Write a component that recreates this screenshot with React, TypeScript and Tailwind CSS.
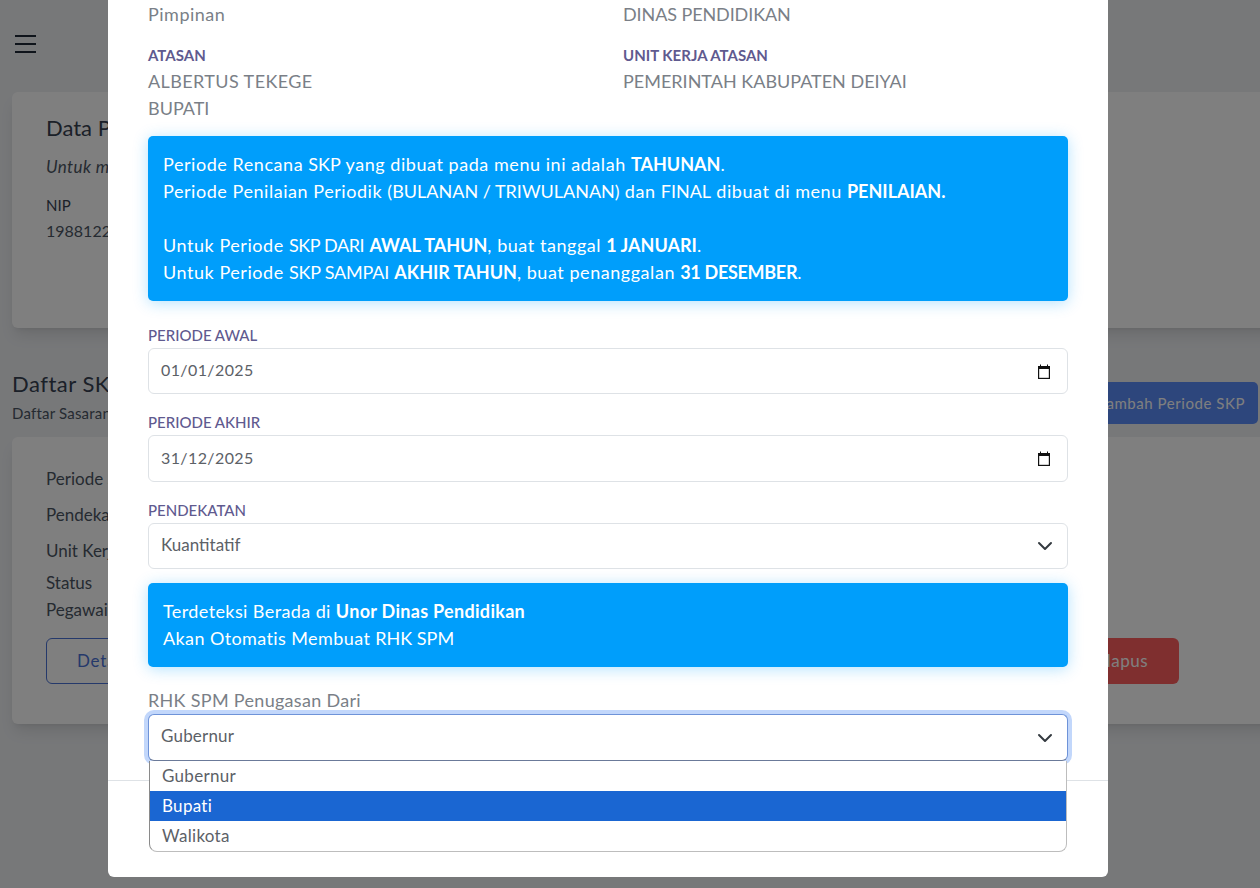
import { ReactNode } from 'react'

function Label({ children }: { children: ReactNode }) {
  return <div className="h-[22px] text-[15px] leading-[20px] font-medium text-[#5f5a8f]">{children}</div>
}

function Caps({ children, className = 'tracking-normal' }: { children: ReactNode; className?: string }) {
  return <span className={className}>{children}</span>
}

function Strong({ children, className = 'tracking-normal' }: { children: ReactNode; className?: string }) {
  return <b className={className}>{children}</b>
}

function CalendarIcon() {
  return (
    <svg width="14" height="15" viewBox="0 0 14 15" className="shrink-0" aria-hidden>
      <path d="M3 0.5h1V2h6V0.5h1V2h2v13H1V2h2z" fill="#111" />
      <rect x="2.2" y="5" width="9.6" height="8.8" fill="#fff" />
    </svg>
  )
}

function Chevron() {
  return (
    <svg width="16" height="16" viewBox="0 0 16 16" className="shrink-0" aria-hidden>
      <path d="M2 5l6 6 6-6" fill="none" stroke="#343a40" strokeWidth="2" strokeLinecap="round" strokeLinejoin="round" />
    </svg>
  )
}

function DateField({ label, value, height }: { label: string; value: string; height: string }) {
  return (
    <div className="mb-[18px]">
      <Label>{label}</Label>
      <div className={`${height} mt-px flex items-center justify-between rounded-[6px] border border-[#dee2e6] bg-white pl-3 pr-4 text-[16px] text-[#5c6167] tracking-[0.4px]`}>
        <span className="pb-[2px]">{value}</span>
        <CalendarIcon />
      </div>
    </div>
  )
}

function Background() {
  return (
    <div className="h-[888px] w-[1260px] overflow-hidden bg-[#eef0f3] font-['Lato',sans-serif] text-[#4b5563]">
      <div className="h-[92px] pl-[15px] pt-[35px]">
        <div className="flex w-[21px] flex-col gap-[6px]">
          <span className="h-[2px] bg-[#1f2937]" />
          <span className="h-[2px] bg-[#1f2937]" />
          <span className="h-[2px] bg-[#1f2937]" />
        </div>
      </div>
      <div className="ml-3 h-[236px] w-[1300px] rounded-[6px] bg-white pl-[34px] pt-[21px] shadow-lg">
        <div className="text-[22px] leading-[30px] text-[#374151]">Data Pegawai</div>
        <div className="mt-[12px] text-[17px] leading-[24px] italic tracking-[0.4px]">Untuk melihat data</div>
        <div className="mt-[16px] text-[15px] leading-[20px] text-[#374151]">NIP</div>
        <div className="mt-[4px] text-[16px] leading-[24px]">198812202015031002</div>
      </div>
      <div className="mt-[42px] flex h-[67px] items-start justify-between pl-3 pr-[2px]">
        <div>
          <div className="text-[22px] leading-[28px] tracking-[0.5px] text-[#374151]">Daftar SKP</div>
          <div className="mt-[4px] text-[15px] tracking-[0.2px]">Daftar Sasaran Kinerja</div>
        </div>
        <div className="mt-[12px] flex h-[42px] items-center rounded-[5px] bg-[#5b8cf8] px-[13px] text-[15px] tracking-[0.55px] text-white">
          Tambah Periode SKP
        </div>
      </div>
      <div className="ml-3 h-[287px] w-[1300px] rounded-[6px] bg-white pl-[34px] pt-[28px] text-[17px] shadow-lg">
        <div className="leading-[27px]">Periode SKP</div>
        <div className="mt-[9px] leading-[27px]">Pendekatan</div>
        <div className="mt-[9px] leading-[27px]">Unit Kerja</div>
        <div className="mt-[5px] leading-[27px]">Status</div>
        <div className="leading-[27px]">Pegawai</div>
        <div className="mt-[15px] flex w-[1133px] justify-between">
          <div className="flex h-[46px] w-[120px] items-center rounded-[6px] border border-[#4a72d6] pl-[30px] text-[17px] tracking-[0.8px] text-[#4a72d6]">
            Detail
          </div>
          <div className="flex h-[46px] w-[120px] items-center justify-end rounded-[6px] bg-[#fe5e5e] pr-[31px] text-[17px] tracking-[0.5px] text-white">
            Hapus
          </div>
        </div>
      </div>
    </div>
  )
}

export default function App() {
  return (
    <div className="relative h-[888px] w-[1260px] overflow-hidden">
      <Background />
      <div className="absolute inset-0 bg-black/50" />

      {/* modal */}
      <div className="absolute left-[108px] top-0 h-[877px] w-[1000px] rounded-b-[6px] bg-white font-['Lato',sans-serif]">
        <div className="px-10 pt-px">
          <div className="grid grid-cols-2 gap-x-[30px] text-[18px] leading-[27px] text-[#7a7f87]">
            <div>
              <div className="tracking-[0.5px]">Pimpinan</div>
              <div className="mt-[16px] text-[15px] font-bold leading-[22px] text-[#5f5a8f]">ATASAN</div>
              <div className="mt-[2px] tracking-[0.4px]">ALBERTUS TEKEGE</div>
              <div>BUPATI</div>
            </div>
            <div>
              <div className="tracking-[-0.1px]">DINAS PENDIDIKAN</div>
              <div className="mt-[16px] text-[15px] font-bold leading-[22px] text-[#5f5a8f]">UNIT KERJA ATASAN</div>
              <div className="mt-[2px]">PEMERINTAH KABUPATEN DEIYAI</div>
            </div>
          </div>

          <div className="mt-[14px] h-[165px] rounded-[5px] bg-[#009efb] p-[15px] text-[18px] leading-[27px] tracking-[0.55px] text-white shadow-[0_2px_15px_rgba(0,158,251,0.3)]">
            <div>
              Periode Rencana <Caps>SKP</Caps> yang dibuat pada menu ini adalah <Strong>TAHUNAN</Strong>.
            </div>
            <div>
              Periode Penilaian Periodik <Caps>(BULANAN / TRIWULANAN)</Caps> dan <Caps>FINAL</Caps> dibuat di menu{' '}
              <Strong>PENILAIAN.</Strong>
            </div>
            <div className="h-[27px]" />
            <div>
              Untuk Periode <Caps className="tracking-[-0.4px]">SKP DARI</Caps> <Strong>AWAL TAHUN</Strong>, buat tanggal{' '}
              <Strong>1 JANUARI</Strong>.
            </div>
            <div>
              Untuk Periode <Caps className="tracking-[-0.2px]">SKP SAMPAI</Caps> <Strong>AKHIR TAHUN</Strong>, buat penanggalan{' '}
              <Strong className="tracking-[-0.3px]">31 DESEMBER</Strong>.
            </div>
          </div>

          <div className="mt-[24px]">
            <DateField label="PERIODE AWAL" value="01/01/2025" height="h-[46px]" />
            <DateField label="PERIODE AKHIR" value="31/12/2025" height="h-[47px]" />
            <div>
              <Label>PENDEKATAN</Label>
              <div className="mt-px flex h-[46px] items-center justify-between rounded-[6px] border border-[#dee2e6] bg-white pl-3 pr-[14px] text-[17px] text-[#5c6167]">
                <span className="pb-[2px]">Kuantitatif</span>
                <Chevron />
              </div>
            </div>
          </div>

          <div className="mt-[14px] h-[84px] rounded-[5px] bg-[#009efb] p-[15px] text-[18px] leading-[27px] tracking-[0.4px] text-white shadow-[0_2px_15px_rgba(0,158,251,0.3)]">
            <div>
              Terdeteksi Berada di <Strong className="tracking-[0.3px]">Unor Dinas Pendidikan</Strong>
            </div>
            <div>
              Akan Otomatis Membuat <Caps>RHK SPM</Caps>
            </div>
          </div>

          <div className="mt-[20px] text-[18px] leading-[27px] tracking-[0.3px] text-[#7a7f87]">RHK SPM Penugasan Dari</div>
          <div className="relative">
            <div className="flex h-[47px] items-center justify-between rounded-[6px] border border-[#6e93d8] border-b-[#6b7a99] bg-white pl-3 pr-[14px] text-[17px] tracking-[0.2px] text-[#5c6167] shadow-[0_0_0_4px_#c2d7fb]">
              <span className="pb-[3px]">Gubernur</span>
              <Chevron />
            </div>

            {/* open option list */}
            <div className="absolute left-px right-px top-[47px] z-10 overflow-hidden rounded-b-[8px] border border-t-0 border-[#bdbdbd] border-l-[#8a8a8a] bg-white text-[17px] leading-[30px] tracking-[0.3px] text-[#5c6167]">
              <div className="pl-3">Gubernur</div>
              <div className="bg-[#1a66d2] pl-3 text-white">Bupati</div>
              <div className="pl-3">Walikota</div>
            </div>
          </div>
        </div>
        <div className="mt-[19px] h-px bg-[#dee2e6]" />
      </div>
    </div>
  )
}
